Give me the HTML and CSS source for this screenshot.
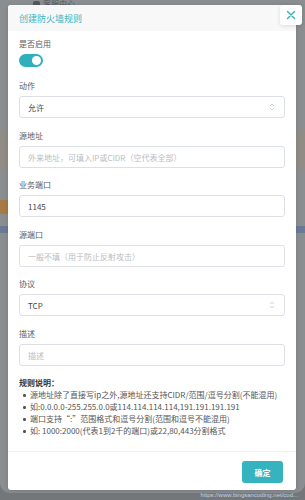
FILE: index.html
```html
<!DOCTYPE html>
<html lang="zh-CN">

<head>
    <meta charset="UTF-8">
    <meta name="viewport" content="width=device-width, initial-scale=1.0">
    <title>创建防火墙规则</title>
    <link rel="stylesheet" href="styles.css">
</head>

<body>
    <div class="screen">
        <!-- Page behind the dialog (dimmed by the mask) -->
        <div class="page">
            <div class="topbar">
                <span class="topbar-icon"></span>
                <span>客服中心</span>
                <span class="topbar-caret">⌄</span>
            </div>
            <div class="row row-beige"></div>
            <div class="row row-orange"></div>
            <div class="row row-blue"></div>
        </div>

        <!-- Create firewall rule dialog -->
        <div class="modal">
            <div class="modal-header">
                <h3>创建防火墙规则</h3>
            </div>
            <button class="modal-close" aria-label="关闭">
                <svg width="10" height="10" viewBox="0 0 10 10">
                    <path d="M1.5 1.5 L8.5 8.5 M8.5 1.5 L1.5 8.5" stroke="#2fb0bb" stroke-width="1.4" stroke-linecap="round" fill="none" />
                </svg>
            </button>

            <div class="modal-body">
                <div class="field field-switch">
                    <label>是否启用</label>
                    <span class="switch"><span class="switch-knob"></span></span>
                </div>

                <div class="field">
                    <label>动作</label>
                    <div class="control select">
                        <span>允许</span>
                        <svg class="select-arrow" width="6" height="8" viewBox="0 0 6 8">
                            <path d="M1 3 L3 1 L5 3 M1 5 L3 7 L5 5" stroke="#c4c7cc" stroke-width="0.8" fill="none" />
                        </svg>
                    </div>
                </div>

                <div class="field tight">
                    <label>源地址</label>
                    <div class="control placeholder">外来地址，可填入IP或CIDR（空代表全部）</div>
                </div>

                <div class="field">
                    <label>业务端口</label>
                    <div class="control">1145</div>
                </div>

                <div class="field tight">
                    <label>源端口</label>
                    <div class="control placeholder">一般不填（用于防止反射攻击）</div>
                </div>

                <div class="field">
                    <label>协议</label>
                    <div class="control select">
                        <span>TCP</span>
                        <svg class="select-arrow" width="6" height="8" viewBox="0 0 6 8">
                            <path d="M1 3 L3 1 L5 3 M1 5 L3 7 L5 5" stroke="#c4c7cc" stroke-width="0.8" fill="none" />
                        </svg>
                    </div>
                </div>

                <div class="field last">
                    <label>描述</label>
                    <div class="control placeholder">描述</div>
                </div>

                <div class="rules">
                    <p class="rules-title">规则说明：</p>
                    <ul>
                        <li>源地址除了直接写ip之外,源地址还支持CIDR/范围/逗号分割(不能混用)</li>
                        <li>如:0.0.0.0-255.255.0.0或114.114.114.114,191.191.191.191</li>
                        <li>端口支持“:”范围格式和逗号分割(范围和逗号不能混用)</li>
                        <li>如: 1000:2000(代表1到2千的端口)或22,80,443分割格式</li>
                    </ul>
                </div>
            </div>

            <div class="modal-footer">
                <button class="btn-primary">确定</button>
            </div>
        </div>
    </div>

    <div class="watermark">https://www.bingsancoding.net/cod...</div>
</body>

</html>
```

FILE: styles.css
```css
body {
    margin: 0;
    padding: 0;
    width: 305px;
    height: 500px;
    overflow: hidden;
    background-color: #74777a;
    font-family: "Noto Sans CJK SC", "Noto Sans", sans-serif;
    position: relative;
}

.screen {
    position: relative;
    height: 493px;
    background-color: #8b8e91;
    border-radius: 0 0 10px 10px;
    overflow: hidden;
}

/* Page behind the mask */
.page {
    display: flex;
    flex-direction: column;
}

.topbar {
    height: 5px;
    overflow: hidden;
    display: flex;
    align-items: flex-end;
    gap: 3px;
    padding-left: 33px;
    font-size: 8px;
    line-height: 10px;
    color: #55585b;
}

.topbar span {
    margin-bottom: -4px;
}

.topbar-icon {
    width: 7px;
    height: 8px;
    border-radius: 2px;
    background-color: #55585b;
}

.topbar-caret {
    margin-left: 2px;
}

.row-beige {
    margin-top: 125px;
    height: 40px;
    background-color: #918d86;
}

.row-orange {
    margin-top: 30px;
    height: 14px;
    width: 20px;
    background-color: #a87a45;
}

.row-blue {
    margin-top: 12px;
    height: 7px;
    background-color: #6a7a96;
}

/* Dialog */
.modal {
    position: absolute;
    top: 5px;
    left: 8px;
    width: 288px;
    height: 485px;
    background-color: #fff;
    border-radius: 3px;
    box-shadow: 0 1px 4px rgba(0, 0, 0, 0.15);
    display: flex;
    flex-direction: column;
}

.modal-header {
    height: 26px;
    flex-shrink: 0;
    background-color: #f8f8f8;
    border-radius: 3px 3px 0 0;
    display: flex;
    align-items: center;
    padding-left: 11px;
}

.modal-header h3 {
    margin: 0;
    font-size: 9px;
    font-weight: normal;
    color: #3bb3bf;
}

.modal-close {
    position: absolute;
    top: 0;
    right: -6px;
    width: 22px;
    height: 20px;
    padding: 0;
    border: none;
    border-radius: 3px;
    background-color: #fff;
    box-shadow: 0 1px 4px rgba(0, 0, 0, 0.12);
    display: flex;
    align-items: center;
    justify-content: center;
}

.modal-body {
    flex: 1;
    padding: 7px 11px 0;
}

.field {
    display: flex;
    flex-direction: column;
    margin-bottom: 12px;
}

.field.tight {
    margin-bottom: 11px;
}

.field.last {
    margin-bottom: 11px;
}

.field label {
    font-size: 8px;
    line-height: 12px;
    color: #5a5d61;
    margin-bottom: 4px;
}

.field-switch {
    margin-bottom: 13px;
}

.switch {
    width: 24px;
    height: 13px;
    border-radius: 7px;
    background-color: #2fb0bb;
    position: relative;
}

.switch-knob {
    position: absolute;
    top: 2px;
    right: 2px;
    width: 9px;
    height: 9px;
    border-radius: 50%;
    background-color: #fff;
}

.control {
    box-sizing: border-box;
    height: 22px;
    border: 1px solid #dcdfe6;
    border-radius: 3px;
    padding: 0 8px;
    display: flex;
    align-items: center;
    justify-content: space-between;
    font-size: 8px;
    color: #444;
}

.control.placeholder {
    color: #b9bcc1;
}

.select-arrow {
    margin-right: 1px;
}

.rules {
    font-size: 8px;
    line-height: 12px;
    color: #555;
}

.rules-title {
    margin: 0;
    font-weight: bold;
    color: #333;
}

.rules ul {
    margin: 0;
    padding-left: 11px;
    list-style: none;
}

.rules li {
    position: relative;
    white-space: nowrap;
}

.rules li::before {
    content: "";
    position: absolute;
    left: -7px;
    top: 5px;
    width: 2.5px;
    height: 2.5px;
    border-radius: 50%;
    background-color: #555;
}

.modal-footer {
    height: 39px;
    flex-shrink: 0;
    box-sizing: border-box;
    border-top: 1px solid #f0f0f0;
    display: flex;
    justify-content: flex-end;
    align-items: flex-start;
    padding: 9px 13px 0;
}

.btn-primary {
    width: 41px;
    height: 22px;
    padding: 0;
    border: none;
    border-radius: 3px;
    background-color: #35b3bf;
    color: #fff;
    font-family: "Noto Sans CJK SC", sans-serif;
    font-size: 8px;
    font-weight: bold;
}

.watermark {
    position: absolute;
    right: 7px;
    bottom: 1px;
    font-family: "Liberation Sans", sans-serif;
    font-size: 6px;
    line-height: 8px;
    color: #bcd4e6;
}
```
